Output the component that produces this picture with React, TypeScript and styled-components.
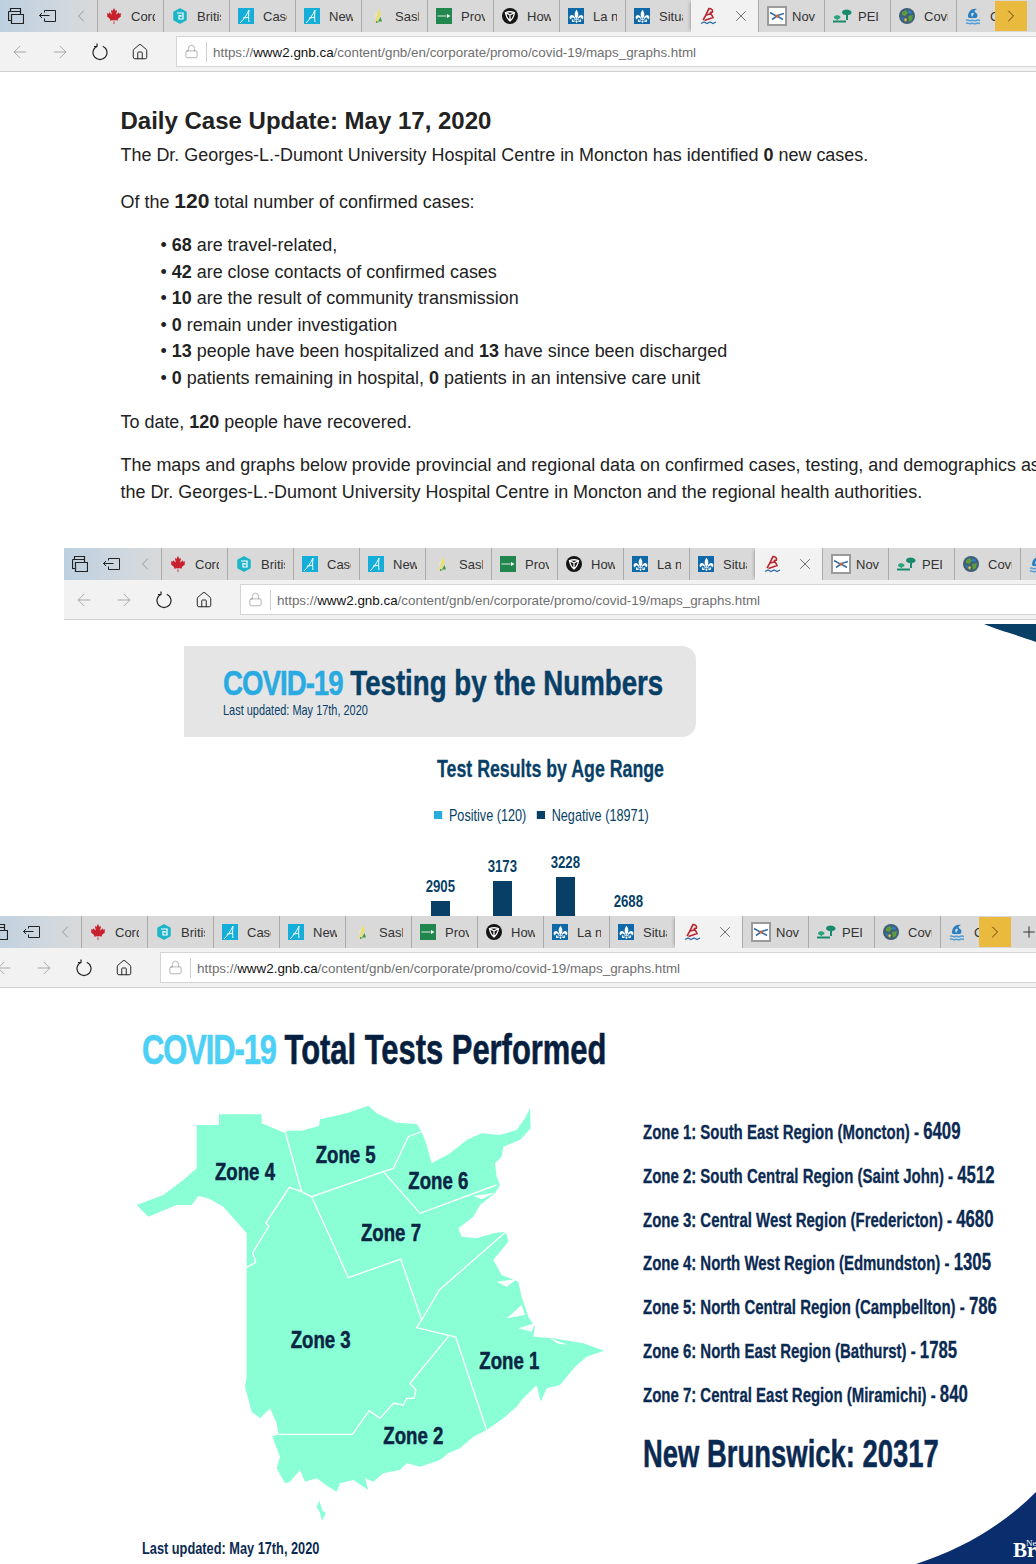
import React from "react";
import styled, { createGlobalStyle } from "styled-components";
import { ArrowLeft, ArrowRight, ChevronLeft, ChevronRight, Home, Lock, Plus, X } from "lucide-react";
import { FaCanadianMapleLeaf } from "react-icons/fa";
import { GiFleurDeLys } from "react-icons/gi";

const GlobalStyle = createGlobalStyle`
  html, body {
    margin: 0;
    padding: 0;
    background: #fff;
    width: 1036px;
    overflow-x: hidden;
  }
  #root {
    width: 1036px;
    height: 1564px;
    overflow: hidden;
  }
`;

// no condensed face is installed, the infographic text is squeezed instead
const Squeeze = styled.span<{ $x: number }>`
  display: inline-block;
  transform: scaleX(${(p) => p.$x});
  transform-origin: 0 50%;
`;

/* browser chrome */

const Shot = styled.section<{ $left: number; $height: number }>`
  margin-left: ${(p) => p.$left}px;
  width: ${(p) => 1036 - p.$left}px;
  height: ${(p) => p.$height}px;
  overflow: hidden;
  display: flex;
  flex-direction: column;
`;

const TabStrip = styled.div`
  height: 32px;
  flex: none;
  display: flex;
  align-items: stretch;
  background: linear-gradient(90deg, #bdd0e0 0%, #d2d8de 70px, #d9d9d9 98px);
`;

const StripTools = styled.div`
  width: 97px;
  flex: none;
  display: flex;
  align-items: center;
  gap: 15px;
  padding-left: 8px;
  box-sizing: border-box;
  color: #222;
`;

const Tab = styled.div`
  width: 66px;
  flex: none;
  box-sizing: border-box;
  border-left: 1px solid #ababab;
  display: flex;
  align-items: center;
  padding-left: 8px;
  background: #d9d9d9;
  font: 13px "Liberation Sans", Arial, sans-serif;
  color: #333;
  overflow: hidden;
  white-space: nowrap;
`;

const FaviconSlot = styled.span`
  width: 25px;
  flex: none;
  display: flex;
  align-items: center;
`;

const TabLabel = styled.span`
  width: 24px;
  overflow: hidden;
`;

const ActiveTab = styled.div`
  width: 67px;
  flex: none;
  box-sizing: border-box;
  background: #f2f2f2;
  display: flex;
  align-items: center;
  justify-content: space-between;
  padding: 0 8px 0 9px;
  color: #444;
  box-shadow: -3px 0 3px -2px rgba(0, 0, 0, 0.25);
`;

const ScrollNext = styled.div`
  width: 32px;
  height: 30px;
  margin: 1px 0 0 -27px;
  flex: none;
  background: #eaba3f;
  display: flex;
  align-items: center;
  justify-content: center;
  color: #5c4510;
`;

const PlusSlot = styled.div`
  width: 36px;
  flex: none;
  display: flex;
  align-items: center;
  justify-content: center;
  color: #222;
`;

const NavBar = styled.div`
  height: 40px;
  flex: none;
  box-sizing: border-box;
  background: #f2f2f2;
  border-bottom: 1px solid #d0d0d0;
  display: flex;
  align-items: flex-start;
`;

const NavButton = styled.div<{ $dark?: boolean }>`
  width: 40px;
  height: 39px;
  flex: none;
  display: flex;
  align-items: center;
  justify-content: center;
  color: ${(p) => (p.$dark ? "#222" : "#9a9a9a")};
`;

const AddressBox = styled.div`
  margin: 4px -40px 0 16px;
  flex: 1;
  height: 31px;
  box-sizing: border-box;
  background: #fff;
  border: 1px solid #d4d4d4;
  display: flex;
  align-items: center;
  font: 13.4px "Liberation Sans", Arial, sans-serif;
  color: #6f6f6f;
  white-space: nowrap;
`;

const LockSlot = styled.span`
  width: 30px;
  height: 20px;
  flex: none;
  box-sizing: border-box;
  border-right: 1px solid #cfcfcf;
  display: flex;
  align-items: center;
  justify-content: center;
  color: #888;
`;

const Url = styled.span`
  padding: 1px 0 0 6px;
  flex: 1;
  b {
    font-weight: 400;
    color: #111;
  }
`;

const PageIcon = styled.span`
  width: 7px;
  height: 12px;
  border: 1.5px solid #222;
  margin-right: 13px;
  flex: none;
`;

/* favicons */

const Square = styled.span<{ $bg: string }>`
  width: 16px;
  height: 16px;
  flex: none;
  background: ${(p) => p.$bg};
  display: flex;
  align-items: center;
  justify-content: center;
  color: #fff;
`;

const HexIcon = () => (
  <svg width="16" height="16" viewBox="0 0 16 16">
    <path fill="#1cb5c9" stroke="#1cb5c9" strokeLinejoin="round" strokeWidth="1.5" d="M8 1l6 3.200v7.600L8 15l-6-3.200V4.200z" />
    <path fill="none" stroke="#fff" strokeWidth="1.200" d="M5 5h6v6H7V7.500h2V9" />
  </svg>
);

const AlbertaIcon = () => (
  <Square $bg="#14aed8">
    <svg width="16" height="16" viewBox="0 0 16 16">
      <path fill="none" stroke="#fff" strokeWidth="1" d="M2 15c3-3 7-8 9-13-.5 4-.5 9 0 12M5 10c2 0 4-.5 6-1" />
    </svg>
  </Square>
);

const SaskIcon = () => (
  <svg width="16" height="16" viewBox="0 0 16 16">
    <path fill="#efe24b" d="M9.500 0l1 6.500L6 15l-1-1 2.500-6z" />
    <path fill="#f4ee9a" d="M6 4l1 3-2 3z" />
    <path fill="#3b9a4a" d="M10.500 9l1.500 4.500H8zM6 13l3 1-3 1z" />
  </svg>
);

const OnIcon = () => (
  <svg width="16" height="16" viewBox="0 0 16 16">
    <rect width="16" height="16" fill="#22874f" />
    <rect x="1.500" y="7.400" width="9" height="1.200" fill="#bcdcc6" />
    <path fill="#fff" d="M11 6l3.500 2L11 10z" />
  </svg>
);

const TrilliumIcon = () => (
  <svg width="16" height="16" viewBox="0 0 16 16">
    <circle cx="8" cy="8" r="8" fill="#151515" />
    <path
      fill="none"
      stroke="#fff"
      strokeWidth="1.300"
      d="M3.500 4.500c3-1 6-1 9 0C12 8 10.500 11 8 13 5.500 11 4 8 3.500 4.500zM8 13V7M3.500 4.500L8 7l4.500-2.500"
    />
  </svg>
);

const QuebecIcon = () => (
  <Square $bg="#0f69a8">
    <GiFleurDeLys size={15} />
  </Square>
);

const NbIcon = () => (
  <svg width="18" height="18" viewBox="0 0 18 18">
    <path
      fill="none"
      stroke="#b9262d"
      strokeWidth="1.600"
      d="M3 13C6 9 7 5 9 1.500c2.500 0 4 1.500 3.500 3.500l-2 .5 2.500 5-8.500 3M6.500 8l5-1.500"
    />
    <path fill="none" stroke="#2a6bb0" strokeWidth="1.300" d="M1 16.500l3-1.500 3 1.500 3-1.500 3 1.500 3-1.500" />
  </svg>
);

const NovaIcon = () => (
  <svg width="20" height="20" viewBox="0 0 20 20">
    <rect x="1" y="1" width="18" height="18" fill="#fff" stroke="#9a9a9a" strokeWidth="2" />
    <path fill="none" stroke="#3a6ea5" strokeWidth="1.600" d="M3 6.500l6 3.500 8-2.500M5 13.500l5-3.500 6 3.500" />
    <circle cx="10" cy="10" r="1.500" fill="#d9662b" />
  </svg>
);

const PeiIcon = () => (
  <svg width="20" height="16" viewBox="0 0 20 16">
    <path fill="#198a6b" d="M9 4c.5-3.500 8.500-3.500 9.500 0 .5 2-1.500 3-3.500 3v5h-2V7c-2.500 0-4-1-4-3z" />
    <path fill="#2aa57e" d="M1 9c.5-2.500 5.500-2.500 6.500 0 0 1.500-1.500 2-2.500 2v1H3.500v-1C2 11 1 10.500 1 9z" />
    <path fill="#198a6b" d="M0 12.500h13v2H0z" />
  </svg>
);

const GlobeIcon = () => (
  <svg width="16" height="16" viewBox="0 0 16 16">
    <circle cx="8" cy="8" r="8" fill="#3d5f78" />
    <path fill="#5c9c3c" d="M3 4l4-2 2 3-3 3-3-1zM9 8l5-1-1 5-3 2z" />
    <path fill="#2f7fc4" d="M9 2l4 2-1 2-3-1zM2 9l3 1-1 3z" />
    <path fill="#e0c23c" d="M6 10l2 1-1 3-2-2z" />
  </svg>
);

const SwimIcon = () => (
  <svg width="16" height="18" viewBox="0 0 16 18">
    <path fill="#2a7fc0" d="M3 10C3 4 7 1 12 2c-3 1-3 3-1 4 2 1 2 4 0 5H4z" />
    <path fill="#cfe4f4" d="M6 7c1-1.500 2-1.500 3-.5L7 10z" />
    <path fill="none" stroke="#4f9ed8" strokeWidth="1.500" d="M1 13.500c2-1.500 3 1 5 0s3 1 5 0 3 0 4 0M1 16.500c2-1.500 3 1 5 0s3 1 5 0 3 0 4 0" />
  </svg>
);

/* the window top that repeats three times */

const TABS: [React.ReactNode, string][] = [
  [<FaCanadianMapleLeaf size={16} color="#c8202c" />, "Cord"],
  [<HexIcon />, "British"],
  [<AlbertaIcon />, "Case"],
  [<AlbertaIcon />, "New"],
  [<SaskIcon />, "Sask"],
  [<OnIcon />, "Prov"],
  [<TrilliumIcon />, "How"],
  [<QuebecIcon />, "La n"],
  [<QuebecIcon />, "Situa"],
];

const TABS_AFTER: [React.ReactNode, string][] = [
  [<NovaIcon />, "Nov"],
  [<PeiIcon />, "PEI C"],
  [<GlobeIcon />, "Covi"],
  [<SwimIcon />, "Co"],
];

const BrowserTop = ({ showPlus }: { showPlus?: boolean }) => (
  <>
    <TabStrip>
      <StripTools>
        <svg width="16" height="16" viewBox="0 0 16 16" fill="none" stroke="#222" strokeWidth="1.200">
          <path d="M2.500 3.500V.5h10v6M.5 3.500h12v3M3.500 6.500h12v9h-12zM.5 3.500v9h3" />
        </svg>
        <svg width="17" height="14" viewBox="0 0 17 14" fill="none" stroke="#222">
          <path d="M5.500 3.500v-2h11v11h-11v-3M.5 6.500h10M3 4L.5 6.500 3 9" />
        </svg>
        <ChevronLeft size={20} strokeWidth={1} color="#8a8a8a" />
      </StripTools>
      {TABS.map(([icon, label]) => (
        <Tab key={label}>
          <FaviconSlot>{icon}</FaviconSlot>
          <TabLabel>{label}</TabLabel>
        </Tab>
      ))}
      <ActiveTab>
        <NbIcon />
        <X size={18} strokeWidth={1} />
      </ActiveTab>
      {TABS_AFTER.map(([icon, label]) => (
        <Tab key={label}>
          <FaviconSlot>{icon}</FaviconSlot>
          <TabLabel>{label}</TabLabel>
        </Tab>
      ))}
      <ScrollNext>
        <ChevronRight size={20} strokeWidth={1.2} />
      </ScrollNext>
      {showPlus && (
        <PlusSlot>
          <Plus size={18} strokeWidth={1.2} />
        </PlusSlot>
      )}
    </TabStrip>
    <NavBar>
      <NavButton>
        <ArrowLeft size={20} strokeWidth={1} />
      </NavButton>
      <NavButton>
        <ArrowRight size={20} strokeWidth={1} />
      </NavButton>
      <NavButton $dark>
        <svg width="16" height="18" viewBox="0 0 16 18" fill="none" stroke="#222" strokeWidth="1.200">
          <path d="M5.200 3.200a7 7 0 1 0 5.600 0M5 .5v3H2" />
        </svg>
      </NavButton>
      <NavButton $dark>
        <Home size={18} strokeWidth={1.3} />
      </NavButton>
      <AddressBox>
        <LockSlot>
          <Lock size={15} strokeWidth={1} />
        </LockSlot>
        <Url>
          https://<b>www2.gnb.ca</b>/content/gnb/en/corporate/promo/covid-19/maps_graphs.html
        </Url>
        <PageIcon />
      </AddressBox>
    </NavBar>
  </>
);

/* first capture: the daily case update */

const Article = styled.article`
  padding: 34px 0 0 120.5px;
  font: 17.95px/27px "Liberation Sans", Arial, sans-serif;
  color: #222;
  white-space: nowrap;
`;

const ArticleTitle = styled.h1`
  margin: 0 0 7px;
  font-size: 24px;
  line-height: 29px;
  font-weight: 700;
`;

const Para = styled.p<{ $gap: number }>`
  margin: 0 0 ${(p) => p.$gap}px;
`;

const Big = styled.b`
  font-size: 21px;
`;

const BulletList = styled.ul`
  margin: 0 0 17px;
  padding: 0 0 0 40px;
  list-style: none;
  line-height: 26.6px;
  li::before {
    content: "• ";
  }
`;

/* second capture: testing banner and chart */

const Sheet = styled.div`
  position: relative;
  flex: 1;
  padding: 26px 0 0 120px;
  font-family: "Liberation Sans", Arial, sans-serif;
  white-space: nowrap;
  color: #073f66;
`;

const CornerMark = styled.svg`
  position: absolute;
  top: 0;
  right: 0;
`;

const Banner = styled.div`
  width: 512px;
  height: 91px;
  box-sizing: border-box;
  padding: 17px 0 0 39px;
  background: #e6e5e6;
  border-radius: 0 14px 14px 0;
`;

const BannerTitle = styled.h2`
  margin: 0;
  font-size: 35px;
  line-height: 40px;
  font-weight: 700;
  -webkit-text-stroke: 0.5px currentColor;
  span span {
    color: #29abe2;
    letter-spacing: -1.25px;
  }
`;

const BannerDate = styled.div`
  margin-top: -1px;
  font-size: 15px;
  line-height: 16px;
`;

const ChartBlock = styled.div`
  margin-left: 242px;
  width: 230px;
`;

const ChartTitle = styled.h3`
  margin: 17px 0 0 11px;
  font-size: 24px;
  line-height: 30px;
  font-weight: 700;
  -webkit-text-stroke: 0.3px currentColor;
`;

const Legend = styled.div`
  margin: 21px 0 0 8px;
  font-size: 17px;
  line-height: 22px;
`;

const LegendItem = styled.span<{ $color: string }>`
  margin-right: 14px;
  &::before {
    content: "";
    display: inline-block;
    width: 11px;
    height: 8px;
    margin: 0 9px 2px 0;
    background: ${(p) => p.$color};
  }
`;

const Bars = styled.div`
  margin: 25px 0 0 -1px;
  display: flex;
  gap: 32.67px;
`;

const BarColumn = styled.div<{ $top: number }>`
  padding-top: ${(p) => p.$top}px;
  width: 30px;
  display: flex;
  flex-direction: column;
  align-items: center;
  font-size: 16.5px;
  line-height: 20px;
  font-weight: 700;
`;

const BarValue = styled.span`
  transform: scaleX(0.8);
`;

const Bar = styled.div`
  margin-top: 5px;
  width: 19px;
  height: 200px;
  background: #073f66;
`;

/* third capture: total tests */

const TestsSheet = styled.div`
  position: relative;
  flex: 1;
  padding: 38px 0 0 158px;
  font-family: "Liberation Sans", Arial, sans-serif;
  white-space: nowrap;
  color: #0b2a52;
`;

const TestsTitle = styled.h2`
  margin: 0;
  font-size: 43px;
  line-height: 46px;
  font-weight: 700;
  color: #071f3f;
  -webkit-text-stroke: 0.6px currentColor;
  span span {
    color: #4dd0f5;
    letter-spacing: -1.5px;
  }
`;

const TestsRow = styled.div`
  margin: 18px 0 0 -22px;
  display: flex;
`;

const MapWrap = styled.div`
  width: 500px;
  flex: none;
`;

const ZoneColumn = styled.div`
  margin-left: 23px;
  padding-top: 27px;
`;

const ZoneLine = styled.div`
  font-size: 20.5px;
  line-height: 28px;
  height: 43.8px;
  font-weight: 700;
  -webkit-text-stroke: 0.3px currentColor;
  b {
    font-size: 23px;
  }
`;

const Total = styled.div`
  margin-top: 8px;
  font-size: 38px;
  line-height: 44px;
  font-weight: 700;
  -webkit-text-stroke: 0.5px currentColor;
`;

const Footnote = styled.div`
  margin: 9px 0 0 22px;
  font-size: 16px;
  line-height: 20px;
  font-weight: 700;
`;

const Crest = styled.div`
  position: absolute;
  right: 0;
  bottom: 0;
  width: 120px;
  height: 72px;
  overflow: hidden;
  font-family: "Liberation Serif", "Times New Roman", serif;
  color: #fff;
  svg {
    display: block;
  }
`;

const CrestSmall = styled.span`
  position: absolute;
  left: 110px;
  top: 47px;
  font-size: 9px;
  line-height: 9px;
`;

const CrestBig = styled.span`
  position: absolute;
  left: 97px;
  top: 49px;
  font-size: 21px;
  line-height: 18px;
  font-weight: 700;
`;

const ZONES: [string, string][] = [
  ["Zone 1: South East Region (Moncton) - ", "6409"],
  ["Zone 2: South Central Region (Saint John) - ", "4512"],
  ["Zone 3: Central West Region (Fredericton) - ", "4680"],
  ["Zone 4: North West Region (Edmundston) - ", "1305"],
  ["Zone 5: North Central Region (Campbellton) - ", "786"],
  ["Zone 6: North East Region (Bathurst) - ", "1785"],
  ["Zone 7: Central East Region (Miramichi) - ", "840"],
];

const MAP_LABELS: [string, number, number][] = [
  ["Zone 5", 587, 220],
  ["Zone 4", 285, 270],
  ["Zone 6", 865, 296],
  ["Zone 7", 723, 454],
  ["Zone 3", 512, 773],
  ["Zone 1", 1078, 838],
  ["Zone 2", 790, 1063],
];

const ZoneMap = () => (
  <svg width="500" height="440" viewBox="0 0 1500 1320" style={{ display: "block" }}>
    <path
      fill="#8affd6"
      d="M230 105L297 105L297 73L425 73L425 100L497 130L500 122L545 122L597 108L600 88L680 70L745 47L770 70L830 98L890 102L905 125L920 165L935 220L990 190L1040 150L1085 130L1140 135L1190 120L1215 85L1230 55L1232 115L1200 150L1150 170L1145 200L1125 220L1130 260L1140 285L1125 310L1080 345L1060 380L1015 415L1025 440L1070 445L1120 430L1158 425L1165 455L1120 510L1145 555L1195 575L1205 620L1225 680L1245 710L1240 740L1300 745L1390 760L1452 782L1400 800L1365 830L1320 885L1280 895L1262 935L1250 885L1205 930L1190 950L1150 985L1100 1020L1060 1040L1020 1075L985 1090L960 1110L900 1130L860 1120L840 1140L790 1150L760 1175L735 1165L745 1200L700 1170L660 1180L650 1205L625 1190L590 1165L555 1175L540 1140L510 1175L495 1180L470 1135L480 1100L457 1040L475 1030L470 1000L450 955L420 985L395 965L375 890L380 860L380 430L350 395L310 350L265 325L235 318L215 345L170 345L85 380L50 345L130 315L190 270L230 235Z"
    />
    <path fill="#8affd6" d="M598 1232L608 1262L618 1270L605 1292L600 1268L590 1250Z" />
    <path
      fill="#fff"
      d="M1060 318L1125 308L1085 328ZM1130 575L1190 568L1160 590ZM1160 685L1205 645L1215 675ZM1195 715L1245 700L1235 725ZM1290 745L1345 765L1310 760Z"
    />
    <path
      fill="none"
      stroke="#fff"
      strokeWidth="4"
      d="M497 130L545 305L575 320L790 245L820 235L865 140L905 125M790 245L900 370L1130 285M545 305L508 292L437 400L447 408L398 488L407 517L380 532M575 320L685 563L842 507L905 690M1158 425L958 600L905 690L890 713L1007 741L1100 1020M985 740L870 880L888 900L882 925L860 925L850 945L820 940L780 985L748 962L697 1033L470 1033"
    />
    {MAP_LABELS.map(([label, x, y]) => (
      <text
        key={label}
        x={x}
        y={y}
        textLength={180}
        lengthAdjust="spacingAndGlyphs"
        fontFamily='"Liberation Sans", Arial, sans-serif'
        fontWeight="700"
        fontSize="72"
        fill="#0b2545"
        stroke="#0b2545"
        strokeWidth="1.500"
      >
        {label}
      </text>
    ))}
  </svg>
);

export default function App() {
  return (
    <>
      <GlobalStyle />
      <Shot $left={0} $height={548}>
        <BrowserTop />
        <Article>
          <ArticleTitle>Daily Case Update: May 17, 2020</ArticleTitle>
          <Para $gap={18}>
            The Dr. Georges-L.-Dumont University Hospital Centre in Moncton has identified <b>0</b> new cases.
          </Para>
          <Para $gap={16}>
            Of the <Big>120</Big> total number of confirmed cases:
          </Para>
          <BulletList>
            <li><b>68</b> are travel-related,</li>
            <li><b>42</b> are close contacts of confirmed cases</li>
            <li><b>10</b> are the result of community transmission</li>
            <li><b>0</b> remain under investigation</li>
            <li><b>13</b> people have been hospitalized and <b>13</b> have since been discharged</li>
            <li><b>0</b> patients remaining in hospital, <b>0</b> patients in an intensive care unit</li>
          </BulletList>
          <Para $gap={16}>
            To date, <b>120</b> people have recovered.
          </Para>
          <Para $gap={0}>
            The maps and graphs below provide provincial and regional data on confirmed cases, testing, and demographics as reported by
            <br />
            the Dr. Georges-L.-Dumont University Hospital Centre in Moncton and the regional health authorities.
          </Para>
        </Article>
      </Shot>
      <Shot $left={64} $height={368}>
        <BrowserTop />
        <Sheet>
          <CornerMark width="54" height="24" viewBox="0 0 54 24">
            <path fill="#073f66" d="M2 4h52v18C38 16 16 10 2 4z" />
          </CornerMark>
          <Banner>
            <BannerTitle>
              <Squeeze $x={0.79}>
                <span>COVID-19</span> Testing by the Numbers
              </Squeeze>
            </BannerTitle>
            <BannerDate>
              <Squeeze $x={0.73}>Last updated: May 17th, 2020</Squeeze>
            </BannerDate>
          </Banner>
          <ChartBlock>
            <ChartTitle>
              <Squeeze $x={0.74}>Test Results by Age Range</Squeeze>
            </ChartTitle>
            <Legend>
              <Squeeze $x={0.745}>
                <LegendItem $color="#29abe2">Positive (120)</LegendItem>
                <LegendItem $color="#073f66">Negative (18971)</LegendItem>
              </Squeeze>
            </Legend>
            <Bars>
              <BarColumn $top={24}>
                <BarValue>2905</BarValue>
                <Bar />
              </BarColumn>
              <BarColumn $top={4}>
                <BarValue>3173</BarValue>
                <Bar />
              </BarColumn>
              <BarColumn $top={0}>
                <BarValue>3228</BarValue>
                <Bar />
              </BarColumn>
              <BarColumn $top={39}>
                <BarValue>2688</BarValue>
                <Bar />
              </BarColumn>
            </Bars>
          </ChartBlock>
        </Sheet>
      </Shot>
      <Shot $left={-16} $height={648}>
        <BrowserTop showPlus />
        <TestsSheet>
          <TestsTitle>
            <Squeeze $x={0.719}>
              <span>COVID-19</span> Total Tests Performed
            </Squeeze>
          </TestsTitle>
          <TestsRow>
            <MapWrap>
              <ZoneMap />
              <Footnote>
                <Squeeze $x={0.798}>Last updated: May 17th, 2020</Squeeze>
              </Footnote>
            </MapWrap>
            <ZoneColumn>
              {ZONES.map(([label, count]) => (
                <ZoneLine key={label}>
                  <Squeeze $x={0.73}>
                    {label}
                    <b>{count}</b>
                  </Squeeze>
                </ZoneLine>
              ))}
              <Total>
                <Squeeze $x={0.722}>New Brunswick: 20317</Squeeze>
              </Total>
            </ZoneColumn>
          </TestsRow>
          <Crest>
            <svg width="120" height="72" viewBox="0 0 120 72">
              <path fill="#0a2d6e" d="M0 72C50 56 90 30 120 0v72z" />
            </svg>
            <CrestSmall>New</CrestSmall>
            <CrestBig>Brunswick</CrestBig>
          </Crest>
        </TestsSheet>
      </Shot>
    </>
  );
}
